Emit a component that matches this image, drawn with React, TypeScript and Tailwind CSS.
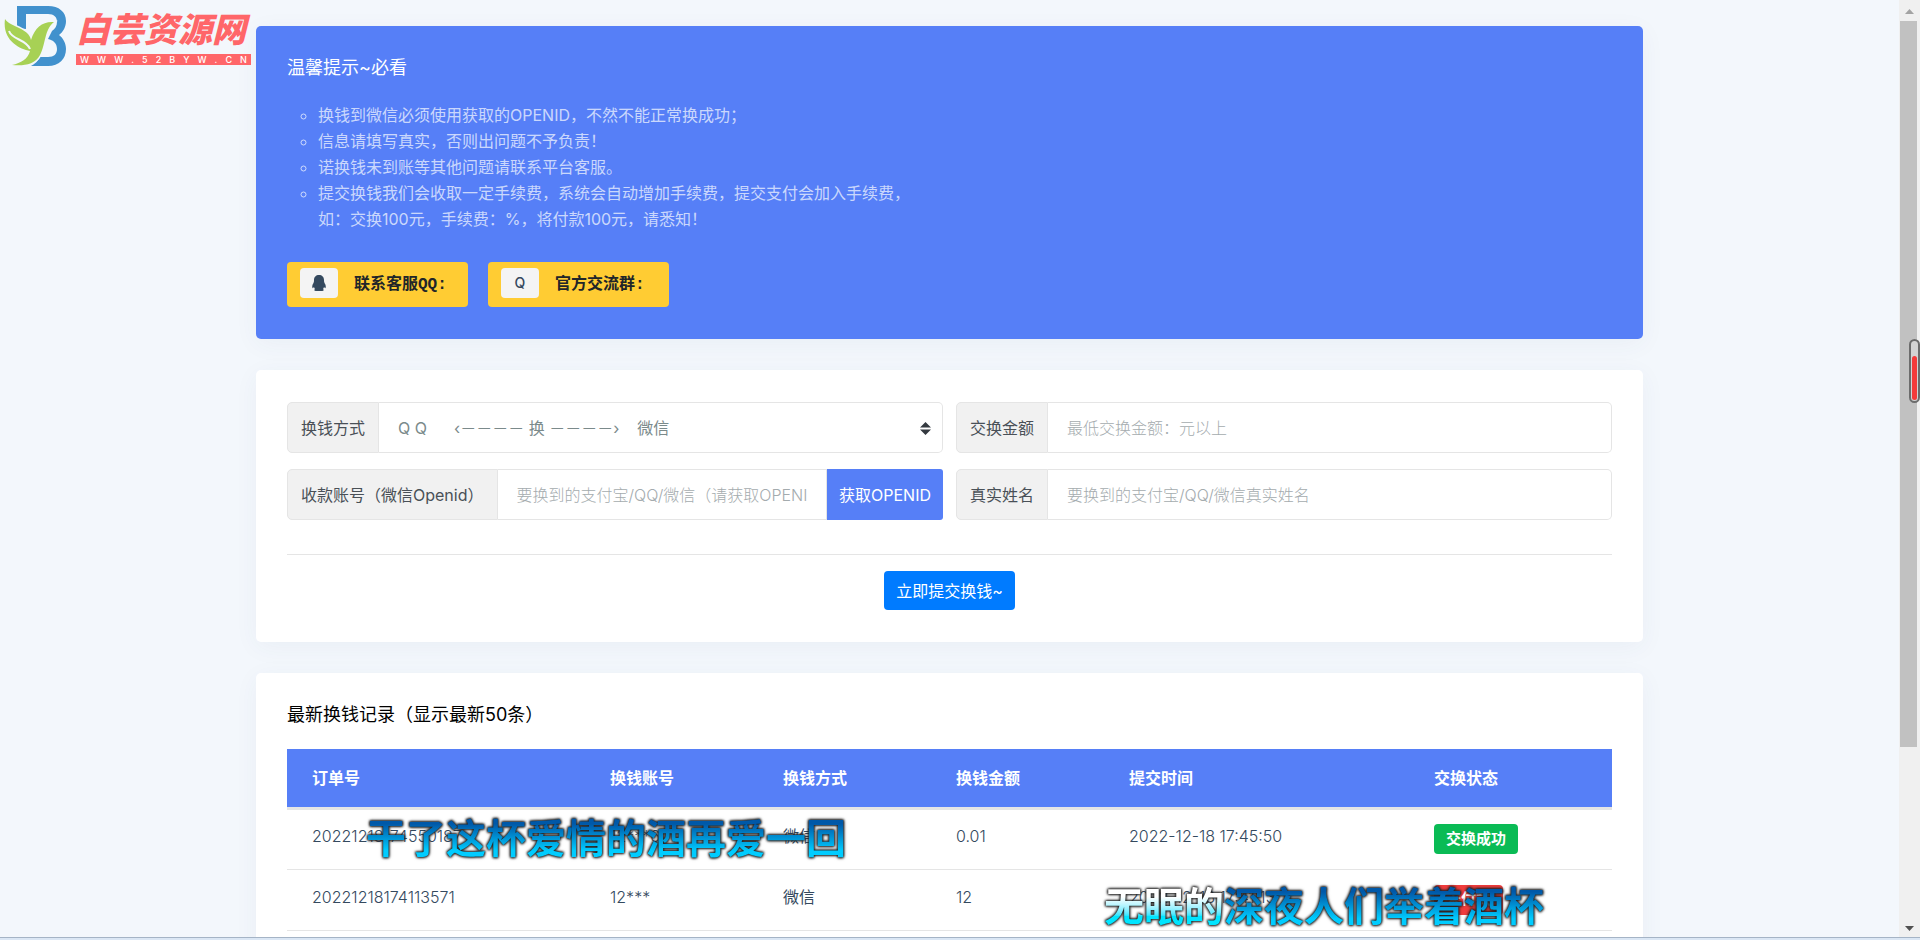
import type { ReactNode } from 'react';

const NOTICES = [
  '换钱到微信必须使用获取的OPENID，不然不能正常换成功；',
  '信息请填写真实，否则出问题不予负责！',
  '诺换钱未到账等其他问题请联系平台客服。',
];

const COLUMNS = ['订单号', '换钱账号', '换钱方式', '换钱金额', '提交时间', '交换状态'];

const RECORDS = [
  { id: '20221218174550187', account: '12***6', method: '微信', amount: '0.01', time: '2022-12-18 17:45:50', status: '交换成功', ok: true },
  { id: '20221218174113571', account: '12***', method: '微信', amount: '12', time: '2022-12-18 17:41:13', status: '未付款', ok: false },
];

const addon = 'flex items-center px-[13px] bg-[#f1f1f1] border border-[#e5e5e5] rounded-l-[5px] whitespace-nowrap font-normal text-[#495057]';
const field = 'min-w-0 flex-1 border border-l-0 border-[#e5e5e5] bg-white px-[19px] outline-none placeholder:text-[#a4abae]';
const cell = 'px-[25px] pb-[6px]';

function Card({ className = '', children }: { className?: string; children: ReactNode }) {
  return (
    <section className={`rounded-[5px] px-[31px] py-8 shadow-[0_5px_25px_rgba(65,84,120,0.05)] ${className}`}>
      {children}
    </section>
  );
}

function Logo() {
  return (
    <div className="absolute left-1 top-1 flex items-start gap-[10px]">
      <svg width="62" height="62" viewBox="0 0 62 62" aria-hidden="true">
        <path
          d="M13 24V2h31c11 0 18 6 18 15 0 6-3 11-7 14 4 3 7 8 7 14 0 10-7 17-18 17H27c4-2 7-5 9-9h8c6 0 9-3 9-8 0-6-4-9-9-10l4-8c3-2 5-5 5-9 0-5-3-8-9-8H22v15z"
          fill="#4191cd"
        />
        <path
          d="M1 15c5 8 24 9 26 21 4-13 12-19 23-18-10 8-8 22-14 33-5 10-17 11-28 10 9-2 16-6 18-14C15 45-2 36 1 15z"
          fill="#a7d155"
          stroke="#f3f7fc"
          strokeWidth="3"
          paintOrder="stroke"
        />
        <path d="M5 27c3 9 17 8 21 18" fill="none" stroke="#f3f7fc" strokeWidth="2" />
      </svg>
      <div className="w-[175px] text-[#ff6669]">
        <div className="h-[50px] whitespace-nowrap text-[34px] leading-[52px] font-black italic">白芸资源网</div>
        <div className="flex h-[11px] items-center justify-between bg-[#ff6669] px-1 text-[9px] leading-none font-medium text-white">
          {'WWW.52BYW.CN'.split('').map((c, i) => (
            <span key={i}>{c}</span>
          ))}
        </div>
      </div>
    </div>
  );
}

function ContactButton({ badge, children }: { badge: ReactNode; children: ReactNode }) {
  return (
    <button className="flex h-[45px] w-[181px] items-center rounded-[4px] bg-[#ffcc33] pl-[13px] font-['Liberation_Mono','Noto_Sans_CJK_SC',monospace] font-bold text-[#212529]">
      <span className="mr-4 mb-[3px] flex h-[30px] w-[38px] items-center justify-center rounded-[4px] bg-[#f4f4f4] font-['Inter',sans-serif] text-sm font-medium text-[#34495e]">
        {badge}
      </span>
      {children}
    </button>
  );
}

function Scrollbar() {
  return (
    <div className="relative flex w-[21px] shrink-0 flex-col items-center bg-[#f0f0f0]">
      <svg className="h-[21px] w-full shrink-0" viewBox="0 0 21 21" aria-hidden="true">
        <path d="M6 14h9l-4.500-5z" fill="#a3a3a3" />
      </svg>
      <div className="mr-[2px] w-[17px] flex-[725] bg-[#c1c1c1]" />
      <div className="flex-[169]" />
      <svg className="h-[21px] w-full shrink-0" viewBox="0 0 21 21" aria-hidden="true">
        <path d="M6 10h9l-4.500 5z" fill="#505050" />
      </svg>
      <div className="absolute right-0 top-[339px] flex h-[64px] w-[11px] flex-col justify-end rounded-full border-2 border-[#6c6c6c] bg-[#d4d4d4] px-[1px] pb-[1px]">
        <div className="h-[44px] rounded-full bg-[#f43b3b]" />
      </div>
    </div>
  );
}

export default function App() {
  return (
    <div className="relative flex h-screen flex-col overflow-hidden bg-[#f3f7fc] font-['Inter','Noto_Sans_CJK_SC',sans-serif] text-base font-light text-[#34495e]">
      <div className="flex min-h-0 flex-1">
        <main className="min-w-0 flex-1 overflow-hidden pt-[26px]">
          <div className="mx-auto flex max-w-[1387px] flex-col gap-[31px]">
            {/* Notice */}
            <Card className="bg-[#567ff7] text-white">
              <h4 className="mb-6 text-lg leading-5 font-normal">温馨提示~必看</h4>
              <ul className="list-[circle] pl-[31px] leading-[26px] font-normal text-white/70">
                {NOTICES.map((n) => (
                  <li key={n}>{n}</li>
                ))}
                <li>
                  提交换钱我们会收取一定手续费，系统会自动增加手续费，提交支付会加入手续费，
                  <br />
                  如：交换100元，手续费：%，将付款100元，请悉知！
                </li>
              </ul>
              <div className="mt-[30px] flex gap-5">
                <ContactButton
                  badge={
                    <svg width="14" height="16" viewBox="0 0 14 16" aria-hidden="true">
                      <path
                        d="M7 0c3 0 5 2 5 5 0 1 0 2 .5 3C14 10 14 12 13.500 13c-.5.500-1-.5-1.500-1-.2 1-.6 1.500-1 2 1 .5 1 2-.8 2H3.800C2 16 2 14.500 3 14c-.4-.5-.8-1-1-2-.5.500-1 1.500-1.500 1C0 12 0 10 1.500 8 2 7 2 6 2 5c0-3 2-5 5-5z"
                        fill="#34495e"
                      />
                    </svg>
                  }
                >
                  联系客服QQ:
                </ContactButton>
                <ContactButton badge="Q">官方交流群:</ContactButton>
              </div>
            </Card>

            {/* Exchange form */}
            <Card className="bg-white">
              <form>
                <div className="grid grid-cols-2 gap-x-[13px] gap-y-4">
                  <div className="flex h-[51px]">
                    <label htmlFor="method" className={addon}>换钱方式</label>
                    <div className="relative flex min-w-0 flex-1">
                      <select
                        id="method"
                        className={`${field} appearance-none rounded-r-[5px] whitespace-pre font-normal text-[#7b8a8b]`}
                      >
                        <option>{'Q Q \u00a0 \u00a0\u00a0 ‹－－－－ 换 －－－－› \u00a0 \u00a0微信'}</option>
                      </select>
                      <svg className="pointer-events-none absolute right-3 top-5 h-[13px] w-[11px]" viewBox="0 0 11 13" aria-hidden="true">
                        <path d="M0 5.500h11L5.500 0zM0 7.500h11L5.500 13z" fill="#343a40" />
                      </svg>
                    </div>
                  </div>
                  <div className="flex h-[51px]">
                    <label htmlFor="amount" className={addon}>交换金额</label>
                    <input id="amount" className={`${field} rounded-r-[5px]`} placeholder="最低交换金额：元以上" />
                  </div>
                  <div className="flex h-[51px]">
                    <label htmlFor="openid" className={addon}>收款账号（微信Openid）</label>
                    <input id="openid" className={field} placeholder="要换到的支付宝/QQ/微信（请获取OPENID）" />
                    <button type="button" className="shrink-0 rounded-r-[3px] bg-[#567ff7] px-3 font-normal text-white">
                      获取OPENID
                    </button>
                  </div>
                  <div className="flex h-[51px]">
                    <label htmlFor="realname" className={addon}>真实姓名</label>
                    <input id="realname" className={`${field} rounded-r-[5px]`} placeholder="要换到的支付宝/QQ/微信真实姓名" />
                  </div>
                </div>
                <hr className="mt-[34px] mb-4 border-[#e5e5e5]" />
                <div className="text-center">
                  <button type="button" className="h-[39px] rounded-[4px] bg-[#007bff] px-3 font-normal text-white">
                    立即提交换钱~
                  </button>
                </div>
              </form>
            </Card>

            {/* Latest records */}
            <Card className="bg-white">
              <h4 className="mb-6 text-lg leading-5 font-normal text-black">最新换钱记录（显示最新50条）</h4>
              <table className="w-full table-fixed text-left">
                <colgroup>
                  <col className="w-[298px]" />
                  <col className="w-[173px]" />
                  <col className="w-[173px]" />
                  <col className="w-[173px]" />
                  <col className="w-[305px]" />
                  <col />
                </colgroup>
                <thead>
                  <tr className="h-[59px] border-b-3 border-[#e5e5e5] bg-[#567ff7] text-white">
                    {COLUMNS.map((c) => (
                      <th key={c} className="px-[25px] font-bold">{c}</th>
                    ))}
                  </tr>
                </thead>
                <tbody>
                  {RECORDS.map((r) => (
                    <tr key={r.id} className="h-[61px] border-b border-[#e5e5e5]">
                      <td className={cell}>{r.id}</td>
                      <td className={cell}>{r.account}</td>
                      <td className={`${cell} font-normal`}>{r.method}</td>
                      <td className={cell}>{r.amount}</td>
                      <td className={cell}>{r.time}</td>
                      <td className="px-[25px]">
                        <span
                          className={`inline-flex h-[30px] items-center rounded-[4px] px-3 text-[15px] font-bold text-white ${
                            r.ok ? 'bg-[#0abb55]' : 'bg-[#f03d3d]'
                          }`}
                        >
                          {r.status}
                        </span>
                      </td>
                    </tr>
                  ))}
                </tbody>
              </table>
            </Card>
          </div>
        </main>
        <Scrollbar />
      </div>
      <div className="h-[3px] shrink-0 border-t border-[#a5b4c6] bg-[#dbe7f5]" />

      <Logo />

      {/* Floating lyrics */}
      <p className="absolute left-[366px] top-[809px] text-[40px] leading-[60px] font-bold whitespace-nowrap [filter:drop-shadow(0_0_1px_#222)_drop-shadow(0_0_1px_#222)_drop-shadow(0_0_1px_#2228)]">
        <span className="bg-linear-to-b from-[#0058a8] from-20% to-[#00ccff] to-75% bg-clip-text text-transparent">
          干了这杯爱情的酒再爱一回
        </span>
      </p>
      <p className="absolute left-[1104px] top-[877px] text-[40px] leading-[60px] font-bold whitespace-nowrap [filter:drop-shadow(0_0_1px_#222)_drop-shadow(0_0_1px_#222)_drop-shadow(0_0_1px_#2228)]">
        <span className="bg-linear-to-b from-white from-30% to-[#00e5ff] to-70% bg-clip-text text-transparent">无眠的</span>
        <span className="bg-linear-to-b from-[#0058a8] from-20% to-[#00ccff] to-75% bg-clip-text text-transparent">
          深夜人们举着酒杯
        </span>
      </p>
    </div>
  );
}
